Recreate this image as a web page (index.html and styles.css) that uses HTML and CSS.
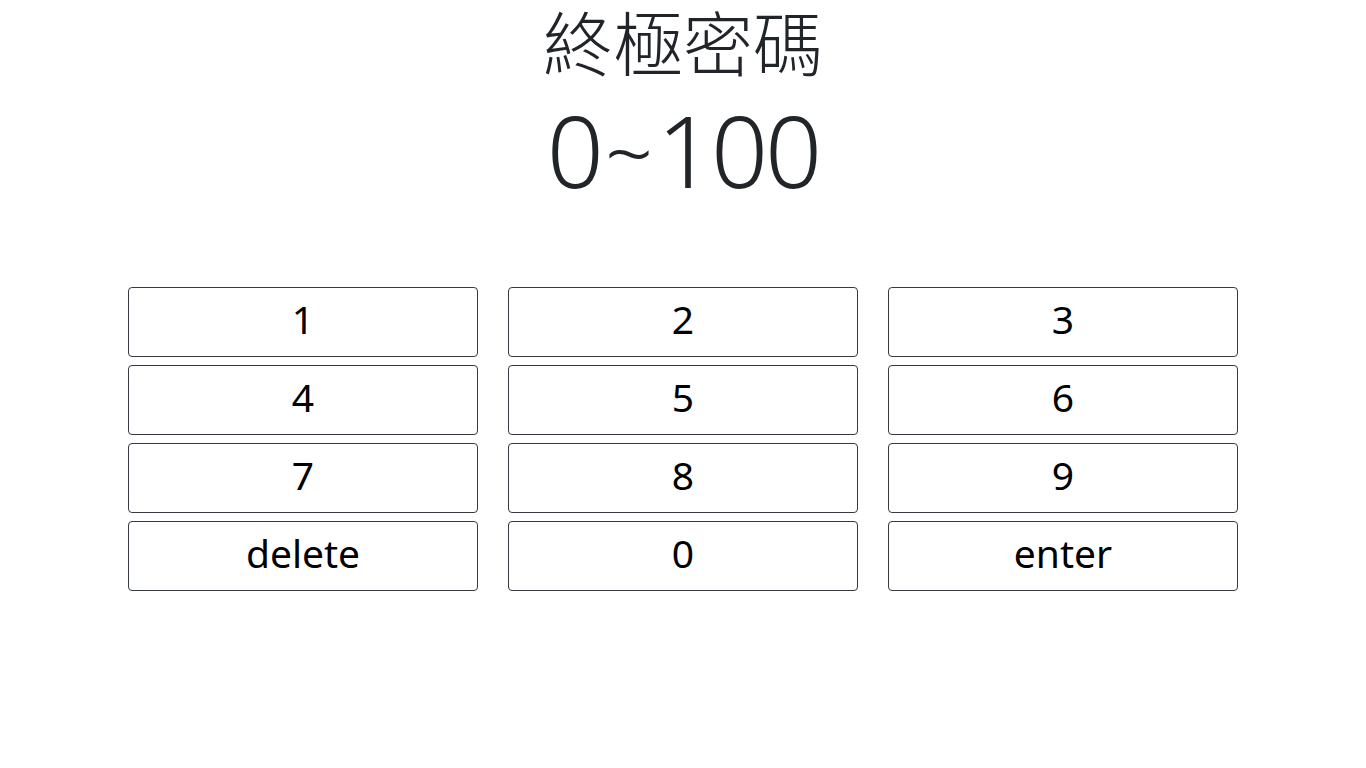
FILE: index.html
```html
<!DOCTYPE html>
<html lang="zh-Hant">
<head>
<meta charset="utf-8">
<title>終極密碼</title>
<link rel="stylesheet" href="styles.css">
</head>
<body>
<div class="wide-row">
  <header class="heading">
    <h1 class="title">終極密碼</h1>
    <p class="range">0<span class="tilde">~</span>100</p>
  </header>
</div>
<main class="container">
  <div class="keypad">
    <button class="key" type="button">1</button>
    <button class="key" type="button">2</button>
    <button class="key" type="button">3</button>
    <button class="key" type="button">4</button>
    <button class="key" type="button">5</button>
    <button class="key" type="button">6</button>
    <button class="key" type="button">7</button>
    <button class="key" type="button">8</button>
    <button class="key" type="button">9</button>
    <button class="key" type="button">delete</button>
    <button class="key" type="button">0</button>
    <button class="key" type="button">enter</button>
  </div>
</main>
</body>
</html>
```
FILE: styles.css
```css
html, body {
  margin: 0;
  padding: 0;
}
body {
  font-family: "Noto Sans", "Open Sans", "Noto Sans CJK TC", sans-serif;
  color: #212529;
  background: #fff;
}
::-webkit-scrollbar {
  height: 17px;
  width: 17px;
  background: #f1f1f1;
}
::-webkit-scrollbar-thumb {
  background: #c1c1c1;
  border-top: 2px solid #f1f1f1;
  border-bottom: 2px solid #f1f1f1;
}
::-webkit-scrollbar-button:single-button {
  display: block;
  width: 17px;
  background: #f1f1f1;
}
.wide-row {
  margin-right: -15px;
}
.heading {
  width: 1366px;
  text-align: center;
}
.title {
  margin: 0;
  font-family: "Noto Sans CJK TC", "Noto Sans CJK SC", sans-serif;
  font-weight: 300;
  font-size: 70px;
  line-height: 82px;
  color: #212529;
}
.range {
  margin: 0;
  font-family: "Noto Sans", "Open Sans", sans-serif;
  font-weight: 300;
  font-size: 100px;
  line-height: 135px;
  letter-spacing: -3px;
  color: #212529;
}
.tilde {
  font-size: 84px;
  line-height: 1;
  vertical-align: 4px;
  margin-left: 4px;
  letter-spacing: 4px;
}
.container {
  width: 1140px;
  margin: 70px auto 0;
  padding: 0 15px;
  box-sizing: border-box;
}
.keypad {
  display: grid;
  grid-template-columns: repeat(3, 350px);
  column-gap: 30px;
  row-gap: 8px;
}
.key {
  height: 70px;
  padding: 0 0 8px;
  border: 1px solid #343a40;
  border-radius: 4px;
  background: #fff;
  color: #000;
  font-family: "Noto Sans", "Open Sans", sans-serif;
  font-size: 39px;
  line-height: 1;
}
```
